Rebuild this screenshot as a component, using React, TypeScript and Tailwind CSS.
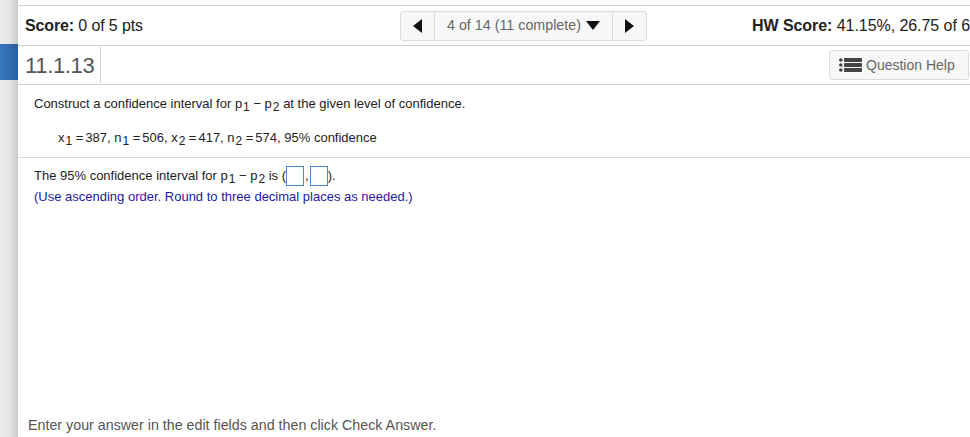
const font = { fontFamily: '"Liberation Sans", Arial, sans-serif' };

function Sub({ children }: { children: string }) {
  return <span className="text-[12px] leading-none align-[-3px] ml-[1px]">{children}</span>;
}

function Eq() {
  return <span className="ml-[3.5px] mr-[2px]">=</span>;
}

function AnswerBox() {
  return <span className="inline-block w-[18px] h-[20px] border border-[#4f86cc] bg-white align-[-6px]" />;
}

function ListIcon() {
  return (
    <svg width="23" height="14" viewBox="0 0 23 14" className="shrink-0">
      <g fill="#444">
        <rect x="5" y="0" width="18" height="4" rx="0.8" />
        <rect x="5" y="5" width="18" height="4" rx="0.8" />
        <rect x="5" y="10" width="18" height="4" rx="0.8" />
        <circle cx="1.8" cy="2" r="1.8" />
        <circle cx="1.8" cy="7" r="1.8" />
        <circle cx="1.8" cy="12" r="1.8" />
      </g>
    </svg>
  );
}

function Arrow({ dir }: { dir: "left" | "right" | "down" }) {
  if (dir === "down") {
    return (
      <svg width="14" height="9" viewBox="0 0 14 9" className="shrink-0">
        <path d="M0 0H14L7 9Z" fill="#111" />
      </svg>
    );
  }
  return (
    <svg width="9" height="14" viewBox="0 0 9 14">
      <path d={dir === "left" ? "M9 0V14L0 7Z" : "M0 0V14L9 7Z"} fill="#111" />
    </svg>
  );
}

export default function App() {
  return (
    <div className="flex w-[970px] h-[437px] overflow-hidden bg-white" style={font}>
      {/* left gutter */}
      <div className="w-[18px] shrink-0 flex flex-col bg-gradient-to-r from-[#ececec] via-[#e6e6e6] to-[#cbcbcb]">
        <div className="h-[44px]" />
        <div className="h-[36px] bg-gradient-to-r from-[#3a78c2] to-[#2a5f9e]" />
      </div>

      <div className="flex-1 min-w-0 flex flex-col">
        <div className="h-[5px]" />
        {/* score row */}
        <div className="h-[41px] border-y border-[#cfd0dc] flex items-center justify-between pl-[7px] overflow-hidden">
          <div className="w-[300px] text-[16px] leading-none tracking-[-0.13px] text-[#222]">
            <b>Score:</b> 0 of 5 pts
          </div>
          <div className="flex h-[30px] ml-[75px] border border-[#dcdcdc] rounded-[3px] bg-[#f7f7f7] text-[14.3px] text-[#666]">
            <div className="w-[34px] flex items-center justify-center border-r border-[#dcdcdc]">
              <Arrow dir="left" />
            </div>
            <div className="w-[178px] flex items-center justify-center gap-[5px] border-r border-[#dcdcdc] whitespace-nowrap">
              4 of 14 (11 complete)
              <Arrow dir="down" />
            </div>
            <div className="w-[33px] flex items-center justify-center">
              <Arrow dir="right" />
            </div>
          </div>
          <div className="ml-auto w-[218px] shrink-0 whitespace-nowrap text-[16px] leading-none tracking-[-0.06px] text-[#222]">
            <b>HW Score:</b> 41.15%, 26.75 of 6
          </div>
        </div>

        {/* question id row */}
        <div className="h-[39px] border-b border-[#cfd0dc] flex items-center justify-between pl-[7px] pr-[1px]">
          <div className="h-[36px] pr-[6px] border-r border-[#cfd0dc] flex items-center text-[22px] tracking-[-0.35px] text-[#555]">
            11.1.13
          </div>
          <div className="w-[140px] h-[30px] border border-[#dcdcdc] rounded-[3px] bg-[#f7f7f7] flex items-center pl-[9px] gap-[4px] text-[14px] text-[#666]">
            <ListIcon />
            Question Help
          </div>
        </div>

        {/* question */}
        <div className="flex-1 flex flex-col text-[13px] text-[#222]">
          <div className="pl-[16px] h-[38px] flex items-end pb-[10px]">
            <p>
              Construct a confidence interval for p<Sub>1</Sub> − p<Sub>2</Sub> at the given level of confidence.
            </p>
          </div>
          <div className="pl-[40px] h-[34px] flex items-center pb-[5px]">
            <p>
              x<Sub>1</Sub>
              <Eq />387, n<Sub>1</Sub>
              <Eq />506, x<Sub>2</Sub>
              <Eq />417, n<Sub>2</Sub>
              <Eq />574, 95% confidence
            </p>
          </div>
          <div className="border-t border-[#d6d6de] pl-[16px] pt-[7px]">
            <p className="h-[25px] leading-[22px]">
              The 95% confidence interval for p<Sub>1</Sub> − p<Sub>2</Sub> is (<AnswerBox /><span className="mx-[1px]">,</span><AnswerBox />).
            </p>
            <p className="text-[#1a1a9c] leading-[14px]">(Use ascending order. Round to three decimal places as needed.)</p>
          </div>
          <div className="mt-auto pl-[10px] pb-[4px] text-[14.27px] leading-[16px] text-[#555]">
            Enter your answer in the edit fields and then click Check Answer.
          </div>
        </div>
      </div>
    </div>
  );
}
